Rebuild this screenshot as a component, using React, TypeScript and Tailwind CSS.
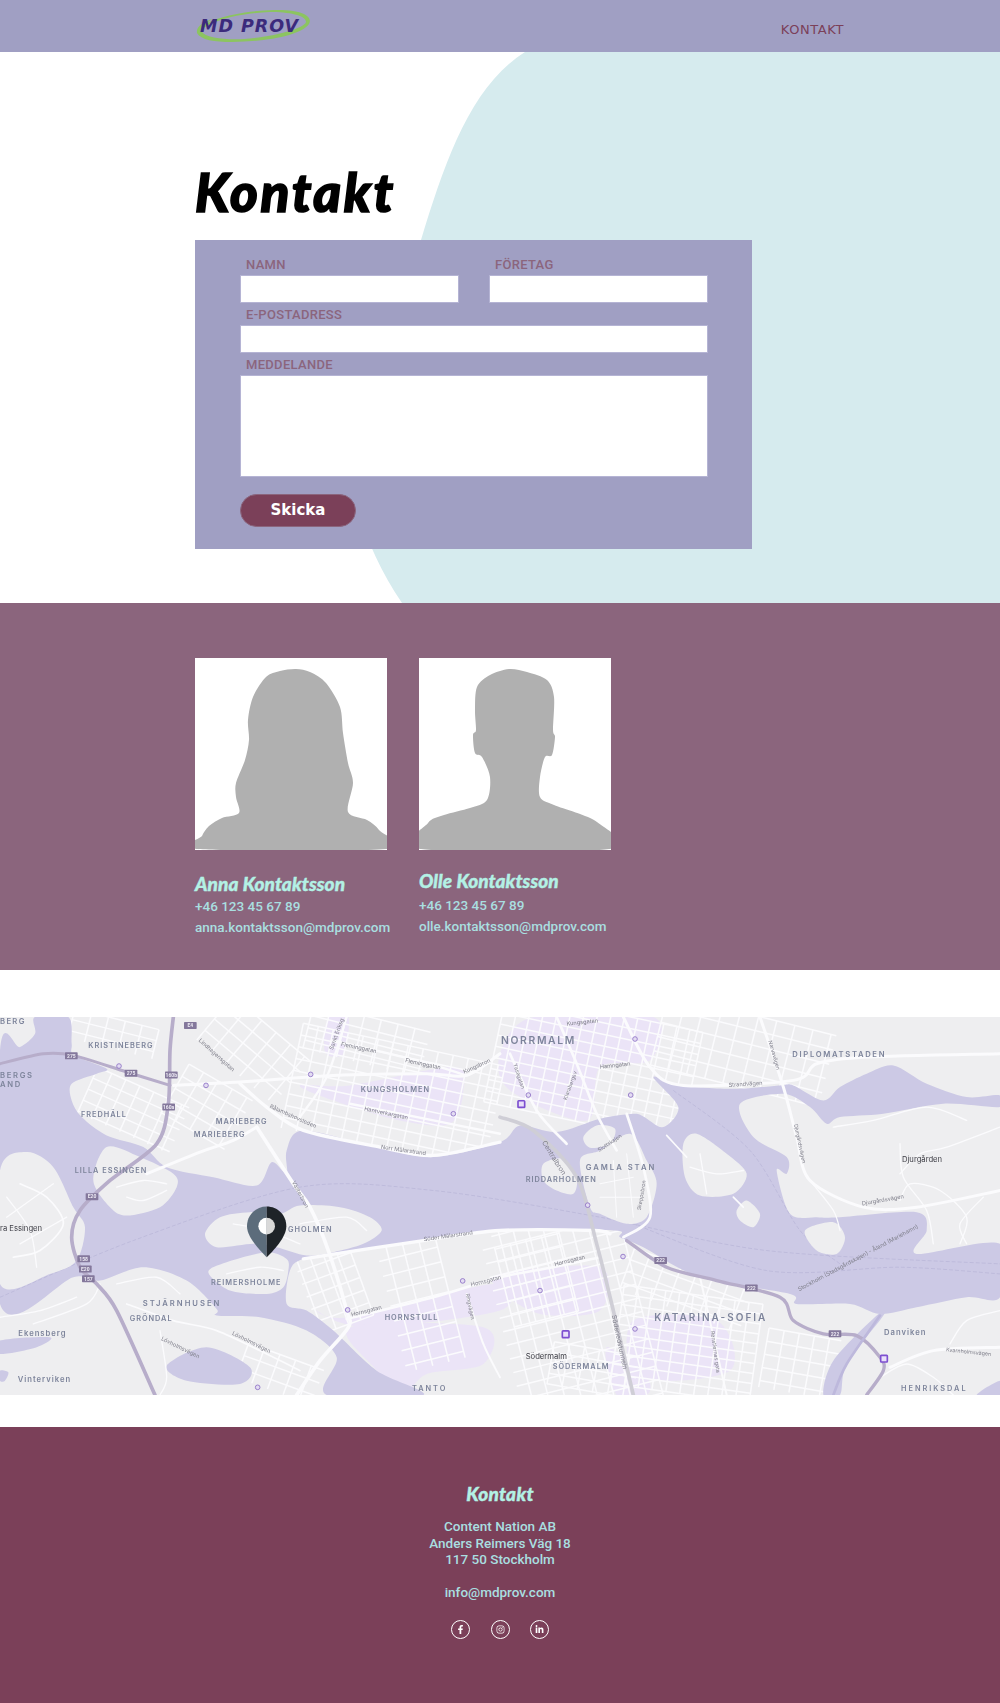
import React from 'react';
import { FaFacebookF, FaInstagram, FaLinkedinIn } from 'react-icons/fa';

type Pt = number[];

// closed or open catmull-rom curve through the points
function curve(points: string, closed = true) {
  const p: Pt[] = points.trim().split(/\s+/).map(s => s.split(',').map(Number));
  const n = p.length;
  const at = (i: number) => (closed ? p[(i + n) % n] : p[Math.max(0, Math.min(n - 1, i))]);
  let d = `M${p[0][0]} ${p[0][1]}`;
  for (let i = 0; i < (closed ? n : n - 1); i++) {
    const [a, b, c, e] = [at(i - 1), at(i), at(i + 1), at(i + 2)];
    const k = 0.15;
    d += ` C${b[0] + (c[0] - a[0]) * k} ${b[1] + (c[1] - a[1]) * k} ${c[0] - (e[0] - b[0]) * k} ${c[1] - (e[1] - b[1]) * k} ${c[0]} ${c[1]}`;
  }
  return closed ? d + 'Z' : d;
}

const water = [
  '0,120 60,110 105,70 105,20 205,20 215,100 222,135 320,175 290,190 215,220 215,270 245,320 320,375 430,410 500,470 640,500 770,525 815,455 860,490 860,420 910,360 1130,410 1300,440 1500,395 1560,345 1670,365 1800,325 1900,310 1930,318 1990,350 2035,290 1960,200 2040,225 2200,235 2340,225 2380,225 2470,270 2520,230 2600,190 2680,165 2780,220 2900,260 3000,255 3000,290 2830,280 2650,310 2520,320 2480,340 2430,290 2350,250 2220,280 2260,380 2360,440 2360,490 2330,480 2370,610 2450,620 2520,620 2750,605 2780,660 2750,730 3000,700 3000,860 2900,860 2750,890 2640,910 2550,880 2390,880 2370,850 2100,800 1930,710 1860,680 1840,660 1500,660 1270,690 1050,720 910,745 870,780 860,880 920,900 1000,960 1130,1080 1270,1153 980,1153 1010,1040 920,960 780,920 650,915 650,895 560,810 430,770 300,810 220,800 0,880',
  '2630,915 2650,915 2540,1060 2520,1153 2470,1153 2500,1050',
  '500,1065 620,1010 750,1070 720,1120 560,1110',
  '0,990 150,980 110,1010 0,1030',
  '2930,1153 3000,1110 3000,1153',
  '0,1080 25,1085 15,1110 0,1110',
];

const islands = [
  '2050,400 2090,370 2180,430 2240,490 2200,550 2100,555 2055,500',
  '2210,600 2240,570 2280,610 2260,650 2220,630',
  '1740,450 1800,420 1890,370 1940,450 1970,520 1940,620 1880,640 1800,610 1770,590',
  '1630,460 1690,445 1730,500 1720,550 1670,540 1630,510',
  '1750,380 1790,345 1845,355 1830,400 1770,412',
  '2415,660 2500,635 2535,680 2510,730 2450,720',
  '615,670 660,620 750,605 840,610 900,585 1020,590 1110,620 1145,660 1090,700 1000,725 920,735 830,710 760,700 650,710',
  '625,785 680,755 800,725 860,745 865,780 850,830 800,850 690,840',
  '280,510 320,410 420,440 520,490 530,530 480,590 380,615 330,590',
  '0,480 80,425 160,470 220,590 255,650 230,750 150,790 0,820',
];

const districts = [
  '900,225 1050,225 1360,170 1390,240 1350,340 1200,330 1000,270',
  '985,20 1045,20 1030,130 975,125',
  '1600,20 1960,20 1950,150 1800,170 1760,330 1530,240 1500,130',
  '1790,470 1920,470 1930,620 1800,610',
  '1900,930 2150,930 2190,1080 1920,1100',
  '1500,790 1800,770 1800,900 1620,910 1500,840',
  '950,900 1050,920 1480,820 1500,900 1100,950',
  '1050,950 1450,950 1450,1060 1280,1090 1220,1153 1180,1153 1130,1080',
  '1820,1010 1940,1100 1940,1153 1850,1153',
];

// streets kept simple: [cx, cy, w, h, angle, stepX, stepY]
const grids: number[][] = [
  [1180, 260, 620, 320, 12, 46, 36],
  [1100, 90, 360, 140, 14, 52, 38],
  [1780, 170, 600, 340, 12, 40, 34],
  [2230, 120, 520, 220, 14, 56, 44],
  [1720, 940, 560, 420, 76, 42, 48],
  [1600, 770, 320, 200, 76, 40, 44],
  [2060, 1000, 420, 300, 8, 42, 30],
  [2060, 840, 380, 130, 20, 50, 36],
  [1250, 830, 480, 180, 76, 46, 50],
  [1000, 830, 240, 170, 70, 40, 40],
  [400, 300, 300, 150, 24, 46, 36],
  [620, 290, 220, 170, 30, 50, 42],
  [2400, 1060, 220, 180, 10, 46, 40],
  [340, 70, 260, 90, 14, 52, 34],
  [760, 120, 300, 170, 40, 56, 44],
  [1780, 1080, 260, 130, 10, 46, 32],
  [840, 1090, 240, 110, 20, 50, 40],
];

const roads: [string, number][] = [
  ['770,350 880,520 930,590 985,720 1040,900 1045,950 960,1050 890,1153', 11],
  ['720,220 800,290 910,360 1140,410 1300,435 1500,395', 10],
  ['520,225 720,215 1000,195 1280,190 1400,195 1500,130', 9],
  ['440,490 600,425 700,390 770,350', 9],
  ['910,745 1270,690 1500,660 1780,660 1830,670', 10],
  ['1040,925 1300,860 1500,800 1660,770 1800,740', 8],
  ['1000,90 1250,150 1400,195', 7],
  ['1050,280 1300,330 1500,370', 7],
  ['1040,20 980,200 900,320', 7],
  ['1870,20 1950,170 2050,225 2380,210 2450,160 2600,140 3000,130', 9],
  ['2280,20 2350,230 2390,380 2430,510 2590,590 2750,590 3000,540', 9],
  ['1670,20 1730,160 1790,310 1850,420', 8],
  ['1530,130 1610,300 1700,400', 8],
  ['2100,800 2180,1153', 6],
  ['2670,1070 2800,1020 3000,1010', 9],
  ['1400,850 1450,1000 1500,1100', 6],
  ['1880,310 1930,470 1950,620 1870,680', 8],
  ['2000,375 2060,440', 5],
  ['2200,560 2230,590', 5],
  ['2700,570 2730,520 2820,540 2900,620 2880,700', 4],
  ['2430,510 2500,600 2520,660', 4],
  ['2700,490 2760,430 2840,410 3000,350', 4],
  ['2500,350 2620,330 2780,290 2900,330', 4],
  ['2700,400 2710,500 2780,600 2800,700', 4],
  ['2950,560 2880,640 2900,700', 4],
  ['2640,1100 2720,1060 2800,1100 2860,1153', 4],
  ['2850,1000 2900,930 3000,900', 4],
  ['60,520 140,560 190,640 120,720 40,740', 5],
  ['20,620 160,520', 4],
  ['60,700 200,620', 4],
  ['20,560 90,660 110,770', 4],
  ['350,530 430,510 500,520', 4],
  ['380,560 430,570 500,540', 4],
  ['380,880 520,930 650,960 820,1040 900,1080', 5],
  ['480,960 500,1100 480,1153', 4],
  ['100,940 260,880 300,820', 4],
  ['0,920 120,900 230,860', 4],
  ['350,820 470,800 540,850', 4],
  ['680,790 780,770 850,780', 4],
  ['700,640 800,660 900,700', 4],
  ['900,640 1040,620 1100,660', 4],
  ['2070,470 2150,490 2230,480', 4],
  ['2100,430 2120,550', 4],
  ['1800,520 1900,500', 3],
  ['1800,560 1920,560', 3],
  ['1840,450 1850,620', 3],
  ['1880,430 1900,620', 3],
];

const labels: [string, number, number, number, number, number?, string?][] = [
  ['KRISTINEBERG', 265, 112, 22, 3],
  ['BERGS', 0, 202, 23, 5],
  ['AND', 0, 229, 23, 5],
  ['BERG', 0, 42, 23, 4],
  ['FREDHÄLL', 243, 321, 22, 3],
  ['MARIEBERG', 647, 342, 22, 3],
  ['MARIEBERG', 581, 381, 22, 3],
  ['LILLA ESSINGEN', 224, 488, 22, 3],
  ['KUNGSHOLMEN', 1082, 245, 22, 3],
  ['GHOLMEN', 864, 665, 22, 3],
  ['REIMERSHOLME', 633, 824, 22, 3],
  ['STJÄRNHUSEN', 428, 886, 23, 6],
  ['GRÖNDAL', 389, 931, 22, 3],
  ['Ekensberg', 55, 975, 23, 3],
  ['Vinterviken', 53, 1113, 23, 3],
  ['HORNSTULL', 1154, 929, 22, 3],
  ['TANTO', 1236, 1141, 22, 6],
  ['NORRMALM', 1503, 100, 31, 5],
  ['DIPLOMATSTADEN', 2377, 141, 23, 5],
  ['GAMLA STAN', 1757, 480, 23, 6],
  ['RIDDARHOLMEN', 1577, 515, 22, 3],
  ['KATARINA-SOFIA', 1963, 931, 30, 6],
  ['SÖDERMALM', 1658, 1076, 22, 3],
  ['HENRIKSDAL', 2703, 1140, 22, 6],
  ['Danviken', 2652, 974, 23, 3],
  ['Djurgården', 2706, 455, 23, 0, 0, '#3d3d45'],
  ['Södermalm', 1577, 1044, 23, 0, 0, '#3d3d45'],
  ['ra Essingen', 0, 661, 23, 0, 0, '#3d3d45'],
];

const streetNames: [string, number, number, number, number][] = [
  ['Lindhagensgatan', 595, 92, 17, 42],
  ['Fleminggatan', 1022, 106, 17, 12],
  ['Fleminggatan', 1215, 155, 17, 12],
  ['Kungsbron', 1393, 190, 17, -24],
  ['Sankt Eriksg', 998, 120, 17, -70],
  ['Rålambshovsleden', 808, 292, 17, 24],
  ['Hantverkargatan', 1092, 300, 17, 12],
  ['Norr Mälarstrand', 1142, 415, 17, 8],
  ['Västerbron', 875, 515, 17, 62],
  ['Söder Mälarstrand', 1272, 692, 17, -8],
  ['Hornsgatan', 1055, 918, 17, -14],
  ['Hornsgatan', 1414, 828, 17, -14],
  ['Ringvägen', 1397, 850, 16, 78],
  ['Lövholmsvägen', 482, 988, 17, 26],
  ['Lövholmsvägen', 695, 972, 17, 26],
  ['Kungsgatan', 1700, 46, 17, -6],
  ['Hamngatan', 1800, 175, 17, -6],
  ['Yasagatan', 1540, 162, 16, 72],
  ['Klarabergsv', 1700, 270, 16, -70],
  ['Strandvägen', 2186, 230, 17, -4],
  ['Narvavägen', 2305, 92, 16, 74],
  ['Djurgårdsvägen', 2382, 342, 16, 78],
  ['Djurgårdsvägen', 2587, 585, 17, -10],
  ['Centralbron', 1625, 396, 21, 58],
  ['Slottskajen', 1798, 425, 16, -34],
  ['Skeppsbron', 1922, 600, 16, -80],
  ['Hornsgatan', 1665, 767, 17, -14],
  ['Söderledstunneln', 1835, 915, 20, 78],
  ['Renstiernas gata', 2132, 962, 16, 82],
  ['Stockholm (Stadsgårdskajen) - Åland (Mariehamn)', 2398, 842, 17, -28],
  ['Kvarnholmsvägen', 2838, 1022, 16, 6],
];

const shields: [string, number, number][] = [
  ['275', 214, 136], ['275', 393, 188], ['160b', 514, 193], ['160a', 506, 289], ['E4', 571, 45],
  ['E20', 276, 558], ['158', 251, 744], ['E20', 256, 775], ['157', 265, 804],
  ['222', 1982, 749], ['222', 2254, 832], ['222', 2505, 969],
];

const stations = [
  [357, 167], [618, 225], [932, 192], [1360, 310], [1043, 898], [1388, 811], [773, 1130],
  [1905, 86], [1585, 254], [1892, 254], [1763, 584], [1869, 738], [1620, 840], [1905, 955],
];

const metro = [[1564, 281], [1697, 971], [2652, 1044]];

function StockholmMap() {
  return (
    <svg viewBox="0 20 3000 1133" className="block w-full h-[378px] blur-[0.3px]" preserveAspectRatio="none">
      <rect x="0" y="0" width="3000" height="1200" fill="#eeeef0" />
      {districts.map((d, i) => <path key={i} d={curve(d)} fill="#ebe4f7" />)}
      {grids.map(([cx, cy, w, h, a, sx, sy], i) => (
        <g key={i} transform={`rotate(${a} ${cx} ${cy})`} stroke="#fbfbfd" strokeWidth="4.5">
          {Array.from({ length: Math.floor(w / sx) + 1 }, (_, k) => (
            <line key={k} x1={cx - w / 2 + k * sx} x2={cx - w / 2 + k * sx} y1={cy - h / 2} y2={cy + h / 2} />
          ))}
          {Array.from({ length: Math.floor(h / sy) + 1 }, (_, k) => (
            <line key={k} y1={cy - h / 2 + k * sy} y2={cy - h / 2 + k * sy} x1={cx - w / 2} x2={cx + w / 2} />
          ))}
        </g>
      ))}
      {water.map((d, i) => <path key={i} d={curve(d)} fill="#ccc9e5" />)}
      <g fill="none" stroke="#b7b3d6" strokeWidth="2" strokeDasharray="12 6">
        <path d={curve('0,860 400,690 900,530 1300,540 1800,620 2300,720 3000,760', false)} />
        <path d={curve('1900,640 2300,780 2700,770 3000,790', false)} />
        <path d={curve('2020,240 2250,420 2400,660 2520,760', false)} />
      </g>
      {islands.map((d, i) => <path key={i} d={curve(d)} fill="#eeeef0" />)}
      <g fill="none" strokeLinecap="round" strokeLinejoin="round">
        {roads.map(([d, w], i) => <path key={i} d={curve(d, false)} stroke="#fbfbfd" strokeWidth={w} />)}
        <path d={curve('1500,320 1600,360 1730,500 1790,700 1840,900 1900,1153', false)} stroke="#cfced6" strokeWidth="11" />
        <path d={curve('520,20 510,120 505,280 470,400 330,510 240,600 215,680 240,770 290,820 350,900 465,1153', false)} stroke="#b7adca" strokeWidth="11" />
        <path d={curve('0,160 130,130 220,135 380,185 510,225', false)} stroke="#b7adca" strokeWidth="9" />
        <path d={curve('1880,690 2000,770 2150,810 2340,860 2380,930 2470,970 2570,975 2640,1040 2650,1080 2600,1153', false)} stroke="#b7adca" strokeWidth="10" />
        <path d={curve('2640,915 2540,1060 2500,1153', false)} stroke="#bdb8dc" strokeWidth="8" />
      </g>
      {stations.map(([x, y], i) => (
        <circle key={i} cx={x} cy={y} r="7" fill="#e3dcf2" stroke="#8b6fc4" strokeWidth="2.5" />
      ))}
      {metro.map(([x, y], i) => (
        <rect key={i} x={x - 10} y={y - 10} width="20" height="20" rx="2" fill="#e9dffa" stroke="#7d4fd0" strokeWidth="5" />
      ))}
      {shields.map(([t, x, y], i) => (
        <g key={i}>
          <rect x={x - 19} y={y - 10} width="38" height="21" rx="2" fill="#84789c" />
          <text x={x} y={y + 6} textAnchor="middle" fontSize="15" fontWeight="700" fill="#ece9f3">{t}</text>
        </g>
      ))}
      <g fontFamily="Inter, sans-serif">
        {labels.map(([t, x, y, s, sp, , c], i) => (
          <text key={i} x={x} y={y} fontSize={s} letterSpacing={sp} fontWeight={c ? 400 : 600} fill={c ?? '#7d849b'}>{t}</text>
        ))}
        {streetNames.map(([t, x, y, s, a], i) => (
          <text key={i} x={x} y={y} fontSize={s} fill="#80808c" transform={`rotate(${a} ${x} ${y})`}>{t}</text>
        ))}
      </g>
      {/* location pin */}
      <path d="M800 588 C767 588 741 614 741 647 C741 680 780 720 800 740 Z" fill="#5c6c7b" />
      <path d="M800 588 C833 588 859 614 859 647 C859 680 820 720 800 740 Z" fill="#1e2328" />
      <path d="M800 622 A25 25 0 0 0 800 672 Z" fill="#ffffff" />
      <path d="M800 622 A25 25 0 0 1 800 672 Z" fill="#d9d9d9" />
    </svg>
  );
}

function Logo() {
  return (
    <svg width="116" height="36" viewBox="0 0 116 36" className="block">
      <path d="M3 26 C0 13 40 3 78 2 C102 1 118 7 113 16 C106 27 70 34 36 34 C18 34 5 32 1 25 C0 18 8 14 16 11 C9 16 5 20 6 24 C10 30 30 32 48 31 C76 29 108 21 110 14 C110 7 92 4 74 4 C44 5 8 13 3 26 Z" fill="#8cc460" />
      <text x="4" y="24" fontFamily="'DejaVu Sans', sans-serif" fontSize="17.5" fontWeight="700" fontStyle="italic" letterSpacing="1" fill="#3b2a7c">MD PROV</text>
    </svg>
  );
}

function Field({ label, children }: { label: string; children: React.ReactNode }) {
  return (
    <label className="block">
      <span className="block pl-[6px] pt-[1px] text-[13px] leading-[21px] font-medium tracking-[0.3px] text-[#8b657d]">{label}</span>
      {children}
    </label>
  );
}

const inputClass = 'block w-full h-[28px] bg-white border border-[#b5b4d4] outline-none';

function Person({ name, phone, email, photo, nameTop, gapClass }: { name: string; phone: string; email: string; photo: string; nameTop: string; gapClass: string }) {
  return (
    <div className="w-[192px]">
      <svg viewBox="0 0 192 192" className="block w-[192px] h-[192px] bg-white">
        <path d={photo} fill="#b0b0b0" />
      </svg>
      <h3 className={`${nameTop} font-['Lato',sans-serif] text-[19px] leading-[24px] font-black italic tracking-[0.1px] [-webkit-text-stroke:0.4px_#b3f1e5] text-[#b3f1e5] whitespace-nowrap`}>{name}</h3>
      <div className={`${gapClass} text-[13.5px] leading-[21px] font-medium text-[#a9dfe0] whitespace-nowrap`}>
        <p>{phone}</p>
        <p>{email}</p>
      </div>
    </div>
  );
}

const anna = curve('3,191 7,178 14,168 27,160 44,155 41,139 41,125 50,102 54,82 53,62 58,39 71,19 85,13 101,11 115,14 131,25 145,49 148,75 153,105 158,125 153,154 172,162 184,172 191,191');
const olle = curve('2,191 9,165 25,157 51,150 68,142 71,119 63,99 56,95 54,77 57,72 56,52 58,29 71,17 90,11 108,14 128,22 135,39 134,72 136,79 133,97 126,99 121,119 121,139 135,147 178,164 190,191');

export default function App() {
  return (
    <div className="w-[1000px] bg-white font-['Roboto',sans-serif]">
      <header className="h-[52px] bg-[#a09fc3] flex items-center justify-between pl-[196px] pr-[156px]">
        <Logo />
        <a className="font-['DejaVu_Sans',sans-serif] text-[13px] font-medium tracking-[0.6px] text-[#7b4059] pt-[8px]">KONTAKT</a>
      </header>

      <section className="relative h-[551px] overflow-hidden">
        <svg viewBox="0 0 1000 551" className="absolute inset-0 w-full h-full">
          <path d="M525 0 C470 35 445 110 421 188 C400 250 345 300 345 380 C345 430 365 497 402 551 L1000 551 L1000 0 Z" fill="#d6ebee" />
        </svg>
        <div className="relative pl-[195px] pt-[110px]">
          <h1 className="h-[78px] font-['Lato',sans-serif] text-[53px] leading-[60px] font-black italic tracking-[2.6px] [-webkit-text-stroke:1.6px_black] text-black">Kontakt</h1>
          <form className="w-[557px] h-[309px] bg-[#a09fc3] pt-[13px] pl-[45px] pr-[44px]">
            <div className="grid grid-cols-2 gap-x-[30px]">
              <Field label="NAMN"><input className={inputClass} /></Field>
              <Field label="FÖRETAG"><input className={inputClass} /></Field>
            </div>
            <Field label="E-POSTADRESS"><input className={inputClass} /></Field>
            <Field label="MEDDELANDE"><textarea className="block w-full h-[102px] bg-white border border-[#b5b4d4] outline-none resize-none" /></Field>
            <button type="button" className="mt-[17px] block w-[116px] h-[33px] rounded-full bg-[#7b4059] border border-[#8b657d] font-['DejaVu_Sans',sans-serif] text-[15px] font-bold text-white">Skicka</button>
          </form>
        </div>
      </section>

      <section className="h-[367px] bg-[#8b657d] pt-[55px] pl-[195px] flex gap-[32px]">
        <Person name="Anna Kontaktsson" phone="+46 123 45 67 89" email="anna.kontaktsson@mdprov.com" photo={anna} nameTop="mt-[22px]" gapClass="mt-[0px]" />
        <Person name="Olle Kontaktsson" phone="+46 123 45 67 89" email="olle.kontaktsson@mdprov.com" photo={olle} nameTop="mt-[19px]" gapClass="mt-[2px]" />
      </section>

      <div className="h-[47px]" />
      <StockholmMap />
      <div className="h-[32px]" />

      <footer className="h-[276px] bg-[#7b4059] pt-[55px] text-center">
        <h4 className="font-['Lato',sans-serif] text-[19px] leading-[24px] font-black italic tracking-[0.3px] [-webkit-text-stroke:0.4px_#b3f1e5] text-[#b3f1e5]">Kontakt</h4>
        <div className="mt-[12px] text-[13.5px] leading-[16.6px] font-medium text-[#a9dfe0]">
          <p>Content Nation AB</p>
          <p>Anders Reimers Väg 18</p>
          <p>117 50 Stockholm</p>
          <p className="mt-[16.6px]">info@mdprov.com</p>
        </div>
        <div className="mt-[19px] flex justify-center gap-[20.5px]">
          {[FaFacebookF, FaInstagram, FaLinkedinIn].map((Icon, i) => (
            <span key={i} className="flex items-center justify-center w-[19px] h-[19px] rounded-full border border-white text-white">
              <Icon className="w-[9px] h-[9px]" />
            </span>
          ))}
        </div>
      </footer>
    </div>
  );
}
